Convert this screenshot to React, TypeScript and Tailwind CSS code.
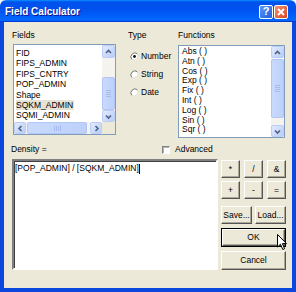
const fields = ["FID", "FIPS_ADMIN", "FIPS_CNTRY", "POP_ADMIN", "Shape", "SQKM_ADMIN", "SQMI_ADMIN"];
const functions = ["Abs ( )", "Atn ( )", "Cos ( )", "Exp ( )", "Fix ( )", "Int ( )", "Log ( )", "Sin ( )", "Sqr ( )"];

function Arrow({ dir }: { dir: "up" | "down" | "left" | "right" }) {
  const d = {
    up: "M2 6 L4.5 3.5 L7 6",
    down: "M2 3.5 L4.5 6 L7 3.5",
    left: "M5.5 2 L3 4.5 L5.5 7",
    right: "M3.5 2 L6 4.5 L3.5 7",
  }[dir];
  return (
    <svg width="9" height="9" viewBox="0 0 9 9">
      <path d={d} fill="none" stroke="#4d6185" strokeWidth="1.6" />
    </svg>
  );
}

function ScrollBtn({ dir, className }: { dir: "up" | "down" | "left" | "right"; className: string }) {
  return (
    <div
      className={`flex items-center justify-center rounded-[2px] border border-[#bccdf7] bg-[linear-gradient(135deg,#e3ebfe,#b9ccf8)] ${className}`}
    >
      <Arrow dir={dir} />
    </div>
  );
}

function Thumb({ className, horizontal }: { className: string; horizontal?: boolean }) {
  return (
    <div
      className={`flex items-center justify-center rounded-[2px] border border-[#b2c5f4] bg-[linear-gradient(90deg,#cadafd,#bcd0fb)] ${className}`}
    >
      <div className={horizontal ? "flex gap-[1px]" : "flex flex-col gap-[1px]"}>
        {[0, 1, 2, 3].map((i) => (
          <div key={i} className={horizontal ? "h-[5px] w-[1px] bg-[#a6bcef]" : "h-[1px] w-[5px] bg-[#a6bcef]"} />
        ))}
      </div>
    </div>
  );
}

function Radio({ checked }: { checked?: boolean }) {
  return (
    <svg width="9" height="9" viewBox="0 0 9 9">
      <circle cx="4.5" cy="4.5" r="4" fill="white" />
      <path d="M1.7 7.3 A4 4 0 0 1 7.3 1.7" fill="none" stroke="#716f64" />
      <path d="M7.3 1.7 A4 4 0 0 1 1.7 7.3" fill="none" stroke="#d8d4c8" />
      {checked && <circle cx="4.5" cy="4.5" r="1.4" fill="#111" />}
    </svg>
  );
}

function Btn({ children, className = "" }: { children: React.ReactNode; className?: string }) {
  return (
    <div
      className={`flex items-center justify-center border border-t-white border-l-white border-r-[#555] border-b-[#555] bg-[#ece9d8] shadow-[inset_-1px_-1px_#aca899] ${className}`}
    >
      {children}
    </div>
  );
}

export default function App() {
  return (
    <div className="relative flex h-[292px] w-[296px] flex-col overflow-hidden bg-white font-['Liberation_Sans',Arial,sans-serif] text-[8.5px] text-black">
      {/* title bar */}
      <div className="flex h-[22px] items-center rounded-t-[6px] bg-[linear-gradient(180deg,#0997ff,#0053ee_8%,#0050ee_40%,#06f_88%,#06f_93%,#005bff_95%,#003dd7_96%,#003dd7)] pl-[5px] pr-[8px]">
        <span className="flex-1 pt-[1px] text-[10px] font-bold text-white [text-shadow:1px_1px_#0f1089]">Field Calculator</span>
        <div className="flex gap-[1px] pt-[1px]">
          <div className="flex h-[14px] w-[14px] items-center justify-center rounded-[2px] border border-white bg-[linear-gradient(135deg,#5d98f8,#1f5ce0)] text-[11px] font-bold leading-none text-white">
            ?
          </div>
          <div className="flex h-[14px] w-[14px] items-center justify-center rounded-[2px] border border-white bg-[linear-gradient(135deg,#f29272,#d9461f)]">
            <svg width="8" height="8" viewBox="0 0 8 8">
              <path d="M1 1 L7 7 M7 1 L1 7" stroke="white" strokeWidth="1.8" />
            </svg>
          </div>
        </div>
      </div>

      {/* body */}
      <div className="flex flex-1 flex-col border-x-4 border-b-4 border-[#0b47dc] bg-[#ece9d8] pl-[8px]">
        <div className="mt-[7px] flex items-start">
          {/* Fields */}
          <div className="w-[115px]">
            <div className="h-[13px] leading-[13px]">Fields</div>
            <div className="ml-[1px] mt-[2px] flex h-[91px] w-[103px] flex-col border border-[#7f9db9] bg-white">
              <div className="flex flex-1">
                <div className="flex-1 pl-[2px] pt-[3px]">
                  {fields.map((f) => (
                    <div key={f} className="h-[10.4px] leading-[10.4px]">
                      <span className={f === "SQKM_ADMIN" ? "bg-[#e6e3d6] pr-[1px]" : ""}>{f}</span>
                    </div>
                  ))}
                </div>
                <div className="flex w-[13px] flex-col bg-[#f4f3ee]">
                  <ScrollBtn dir="up" className="h-[13px]" />
                  <div className="flex-1 pt-[19px]">
                    <Thumb className="h-[33px]" />
                  </div>
                  <ScrollBtn dir="down" className="h-[12px]" />
                </div>
              </div>
              <div className="flex h-[12px] bg-[#f4f3ee]">
                <ScrollBtn dir="left" className="w-[12px]" />
                <Thumb horizontal className="ml-[1px] w-[60px]" />
                <div className="flex-1" />
                <ScrollBtn dir="right" className="w-[12px]" />
                <div className="w-[13px] bg-[#ece9d8]" />
              </div>
            </div>
          </div>

          {/* Type */}
          <div className="w-[51px]">
            <div className="h-[13px] pl-[1px] leading-[13px]">Type</div>
            <div className="ml-[3px] mt-[5px]">
              {[
                ["Number", true],
                ["String", false],
                ["Date", false],
              ].map(([label, checked]) => (
                <div key={label as string} className="flex h-[18px] items-center gap-[2px]">
                  <Radio checked={checked as boolean} />
                  <span>{label as string}</span>
                </div>
              ))}
            </div>
          </div>

          {/* Functions */}
          <div>
            <div className="h-[13px] leading-[13px]">Functions</div>
            <div className="mt-[3px] flex h-[93px] w-[107px] border border-[#7f9db9] bg-white">
              <div className="flex-1 pl-[3px] pt-[1px]">
                {functions.map((f) => (
                  <div key={f} className="h-[9.8px] leading-[9.8px]">
                    {f}
                  </div>
                ))}
              </div>
              <div className="flex w-[13px] flex-col bg-[#f4f3ee]">
                <ScrollBtn dir="up" className="h-[12px]" />
                <div className="flex-1 pt-[1px]">
                  <Thumb className="h-[59px]" />
                </div>
                <ScrollBtn dir="down" className="h-[12px]" />
              </div>
            </div>
          </div>
        </div>

        {/* Density row */}
        <div className="mt-[5px] flex h-[13px] items-center">
          <div className="-ml-[1px] w-[151px]">Density =</div>
          <div className="h-[8px] w-[8px] border border-t-[#808080] border-l-[#808080] border-b-white border-r-white bg-white shadow-[inset_1px_1px_#b8b4a8]" />
          <span className="ml-[5px]">Advanced</span>
        </div>

        {/* expression + buttons */}
        <div className="mt-[3px] flex">
          <div className="h-[111px] w-[206px] border-2 border-t-[#808080] border-l-[#808080] border-b-white border-r-white bg-white shadow-[inset_1px_1px_#404040]">
            <div className="flex h-[13px] items-center pl-[1px] pt-[2px]">
              <span>[POP_ADMIN] / [SQKM_ADMIN]</span>
              <span className="h-[10px] w-[1px] bg-black" />
            </div>
          </div>
          <div className="ml-[3px] flex w-[65px] flex-col pt-[1px]">
            <div className="flex h-[18px] justify-between">
              <Btn className="w-[19px]">*</Btn>
              <Btn className="w-[19px]">/</Btn>
              <Btn className="w-[19px]">&amp;</Btn>
            </div>
            <div className="mt-[3px] flex h-[18px] justify-between">
              <Btn className="w-[19px]">+</Btn>
              <Btn className="w-[19px]">-</Btn>
              <Btn className="w-[19px]">=</Btn>
            </div>
            <div className="mt-[7px] flex h-[18px] justify-between">
              <Btn className="w-[31px]">Save...</Btn>
              <Btn className="w-[31px]">Load...</Btn>
            </div>
            <div className="mt-[4px] h-[19px] border border-black">
              <Btn className="h-full">OK</Btn>
            </div>
            <Btn className="mt-[4px] h-[19px]">Cancel</Btn>
          </div>
        </div>
      </div>

      {/* mouse pointer */}
      <svg className="absolute left-[277px] top-[234px]" width="11" height="17" viewBox="0 0 11 17">
        <path d="M0.5 0.5 L0.5 13 L3.5 10.2 L5.8 15.5 L7.6 14.7 L5.4 9.6 L9.5 9.6 Z" fill="white" stroke="black" strokeWidth="1" />
      </svg>
    </div>
  );
}
